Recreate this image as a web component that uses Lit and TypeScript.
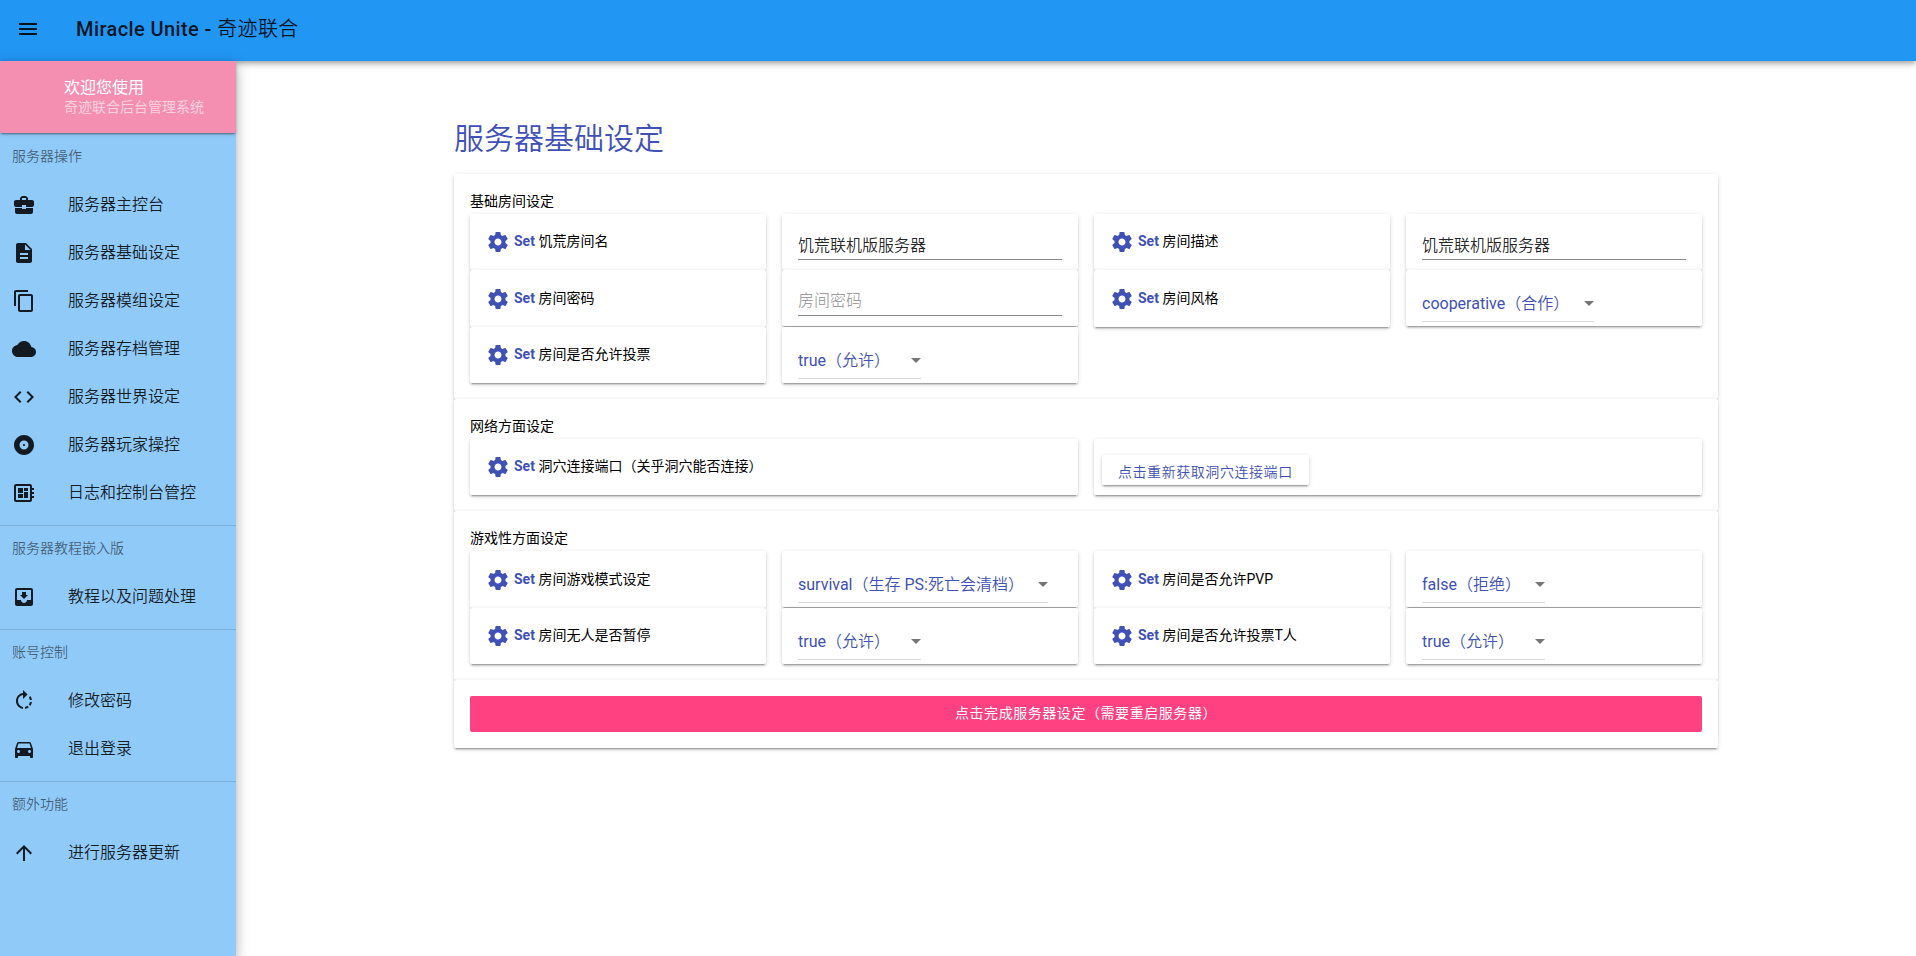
import { LitElement, html, css, svg } from "lit";
import { customElement, property, state } from "lit/decorators.js";
import { classMap } from "lit/directives/class-map.js";

const ICONS: Record<string, string> = {
  menu: "M3 18h18v-2H3v2zm0-5h18v-2H3v2zm0-7v2h18V6H3z",
  business: "M10 16v-1H3.01L3 19c0 1.11.89 2 2 2h14c1.11 0 2-.89 2-2v-4h-7v1h-4zm10-9h-4.01V5l-2-2h-4l-2 2v2H4c-1.1 0-2 .9-2 2v3c0 1.11.89 2 2 2h6v-2h4v2h6c1.1 0 2-.9 2-2V9c0-1.1-.9-2-2-2zm-6 0h-4V5h4v2z",
  description: "M14 2H6c-1.1 0-1.99.9-1.99 2L4 20c0 1.1.89 2 1.99 2H18c1.1 0 2-.9 2-2V8l-6-6zm2 16H8v-2h8v2zm0-4H8v-2h8v2zm-3-5V3.5L18.500 9H13z",
  copy: "M16 1H4c-1.1 0-2 .9-2 2v14h2V3h12V1zm3 4H8c-1.1 0-2 .9-2 2v14c0 1.1.9 2 2 2h11c1.1 0 2-.9 2-2V7c0-1.1-.9-2-2-2zm0 16H8V7h11v14z",
  cloud: "M19.350 10.040C18.670 6.590 15.640 4 12 4 9.110 4 6.600 5.640 5.350 8.040 2.340 8.360 0 10.910 0 14c0 3.310 2.690 6 6 6h13c2.760 0 5-2.240 5-5 0-2.640-2.050-4.780-4.650-4.960z",
  code: "M9.400 16.600L4.800 12l4.600-4.600L8 6l-6 6 6 6 1.400-1.400zm5.200 0l4.600-4.600-4.600-4.600L16 6l6 6-6 6-1.400-1.400z",
  album: "M12 2C6.480 2 2 6.480 2 12s4.480 10 10 10 10-4.480 10-10S17.520 2 12 2zm0 14.500c-2.490 0-4.500-2.010-4.500-4.500S9.510 7.500 12 7.500s4.500 2.010 4.500 4.500-2.010 4.500-4.500 4.500zm0-5.500c-.55 0-1 .45-1 1s.45 1 1 1 1-.45 1-1-.45-1-1-1z",
  board: "M22 9V7h-2V5c0-1.100-.9-2-2-2H4c-1.100 0-2 .9-2 2v14c0 1.100.9 2 2 2h14c1.100 0 2-.9 2-2v-2h2v-2h-2v-2h2v-2h-2V9h2zm-4 10H4V5h14v14zM6 13h5v4H6zm6-6h4v3h-4zM6 7h5v5H6zm6 4h4v6h-4z",
  inbox: "M19 3H4.990c-1.110 0-1.980.9-1.980 2L3 19c0 1.100.88 2 1.990 2H19c1.100 0 2-.9 2-2V5c0-1.100-.9-2-2-2zm0 12h-4c0 1.660-1.340 3-3 3s-3-1.340-3-3H4.990V5H19v10zm-3-5h-2V7h-4v3H8l4 4 4-4z",
  rotate: "M15.550 5.550L11 1v3.070C7.060 4.560 4 7.920 4 12s3.050 7.440 7 7.930v-2.020c-2.840-.48-5-2.940-5-5.910s2.160-5.430 5-5.910V10l4.550-4.450zM19.930 11c-.17-1.390-.72-2.730-1.620-3.890l-1.420 1.420c.54.75.88 1.600 1.020 2.470h2.020zM13 17.900v2.020c1.390-.17 2.740-.71 3.900-1.610l-1.440-1.440c-.75.54-1.590.89-2.460 1.030zm3.890-2.420l1.420 1.410c.9-1.160 1.450-2.500 1.620-3.890h-2.020c-.14.87-.48 1.720-1.020 2.480z",
  car: "M18.920 6.010C18.720 5.420 18.160 5 17.500 5h-11c-.66 0-1.210.42-1.420 1.010L3 12v8c0 .55.45 1 1 1h1c.55 0 1-.45 1-1v-1h12v1c0 .55.45 1 1 1h1c.55 0 1-.45 1-1v-8l-2.080-5.990zM6.500 16c-.83 0-1.500-.67-1.500-1.500S5.670 13 6.500 13s1.500.67 1.500 1.500S7.330 16 6.500 16zm11 0c-.83 0-1.500-.67-1.500-1.500s.67-1.500 1.500-1.500 1.500.67 1.500 1.500-.67 1.500-1.500 1.500zM5 11l1.500-4.500h11L19 11H5z",
  up: "M4 12l1.410 1.410L11 7.830V20h2V7.830l5.580 5.590L20 12l-8-8-8 8z",
  settings: "M19.430 12.980c.04-.32.07-.64.07-.98s-.03-.66-.07-.98l2.110-1.650c.19-.15.24-.42.12-.64l-2-3.460c-.12-.22-.39-.3-.61-.22l-2.490 1c-.52-.4-1.080-.73-1.690-.98l-.38-2.650C14.460 2.180 14.250 2 14 2h-4c-.25 0-.46.18-.49.42l-.38 2.650c-.61.25-1.170.59-1.690.98l-2.490-1c-.23-.09-.49 0-.61.22l-2 3.460c-.13.22-.07.49.12.64l2.110 1.650c-.04.32-.07.65-.07.98s.03.66.07.98l-2.110 1.650c-.19.15-.24.42-.12.64l2 3.460c.12.22.39.3.61.22l2.490-1c.52.4 1.080.73 1.690.98l.38 2.650c.03.24.24.42.49.42h4c.25 0 .46-.18.49-.42l.38-2.650c.61-.25 1.170-.59 1.690-.98l2.490 1c.23.09.49 0 .61-.22l2-3.460c.12-.22.07-.49-.12-.64l-2.110-1.650zM12 15.500c-1.930 0-3.500-1.570-3.500-3.500s1.570-3.500 3.500-3.500 3.500 1.570 3.500 3.500-1.570 3.500-3.500 3.500z",
};

const icon = (name: string) => html`
  <svg class="icon" width="24" height="24" viewBox="0 0 24 24" aria-hidden="true">
    ${svg`<path fill="currentColor" d=${ICONS[name]}></path>`}
  </svg>
`;

const base = css`
  * {
    box-sizing: border-box;
  }
  :host {
    display: block;
    font-family: Roboto, "Noto Sans CJK SC DemiLight", "Noto Sans CJK SC", sans-serif;
    font-size: 14px;
    line-height: 24px;
  }
  .icon {
    display: block;
    flex: none;
  }
`;

interface NavGroup {
  title: string;
  items: { icon: string; label: string }[];
}

const NAV: NavGroup[] = [
  {
    title: "服务器操作",
    items: [
      { icon: "business", label: "服务器主控台" },
      { icon: "description", label: "服务器基础设定" },
      { icon: "copy", label: "服务器模组设定" },
      { icon: "cloud", label: "服务器存档管理" },
      { icon: "code", label: "服务器世界设定" },
      { icon: "album", label: "服务器玩家操控" },
      { icon: "board", label: "日志和控制台管控" },
    ],
  },
  { title: "服务器教程嵌入版", items: [{ icon: "inbox", label: "教程以及问题处理" }] },
  {
    title: "账号控制",
    items: [
      { icon: "rotate", label: "修改密码" },
      { icon: "car", label: "退出登录" },
    ],
  },
  { title: "额外功能", items: [{ icon: "up", label: "进行服务器更新" }] },
];

@customElement("side-drawer")
export class SideDrawer extends LitElement {
  static styles = [
    base,
    css`
      :host {
        background: #90caf9;
        color: rgba(0, 0, 0, 0.87);
        box-shadow: 0 5px 5px -3px rgba(0, 0, 0, 0.2), 0 8px 10px 1px rgba(0, 0, 0, 0.14),
          0 3px 14px 2px rgba(0, 0, 0, 0.12);
      }
      .welcome {
        height: 72px;
        padding: 15px 16px 16px 64px;
        border-radius: 2px;
        background: #f48fb1;
        color: #fff;
        font-family: "Noto Sans CJK SC", sans-serif;
        line-height: 20px;
        box-shadow: 0 3px 1px -2px rgba(0, 0, 0, 0.2), 0 2px 2px 0 rgba(0, 0, 0, 0.14),
          0 1px 5px 0 rgba(0, 0, 0, 0.12);
      }
      .welcome-title {
        font-size: 16px;
      }
      .welcome-text {
        color: rgba(255, 255, 255, 0.6);
      }
      .group + .group {
        margin-top: 8px;
      }
      .group + .group .group-title {
        border-top: 1px solid rgba(0, 0, 0, 0.12);
        line-height: 44px;
      }
      .group-title {
        margin: 0;
        height: 48px;
        padding: 0 12px;
        font-size: 14px;
        font-weight: 400;
        line-height: 46px;
        color: rgba(0, 0, 0, 0.54);
      }
      .list {
        margin: 0;
        padding: 0;
        list-style: none;
      }
      .item {
        display: flex;
        align-items: center;
        gap: 32px;
        height: 48px;
        padding: 0 12px;
        font-size: 16px;
        color: inherit;
        text-decoration: none;
      }
      .item:hover {
        background: rgba(0, 0, 0, 0.08);
      }
    `,
  ];

  render() {
    return html`
      <div class="welcome">
        <div class="welcome-title">欢迎您使用</div>
        <div class="welcome-text">奇迹联合后台管理系统</div>
      </div>
      <nav>
        ${NAV.map(
          (group) => html`
            <section class="group">
              <h2 class="group-title">${group.title}</h2>
              <ul class="list">
                ${group.items.map(
                  (item) => html`<li><a class="item" href="#">${icon(item.icon)}<span>${item.label}</span></a></li>`
                )}
              </ul>
            </section>
          `
        )}
      </nav>
    `;
  }
}

type Control =
  | { kind: "text"; value: string; placeholder: string }
  | { kind: "select"; options: string[]; value: string }
  | { kind: "button"; text: string };

interface Field {
  id: string;
  label: string;
  control: Control;
}

const YES_NO = ["true（允许）", "false（拒绝）"];

const SECTIONS: { name: string; title: string; fields: Field[] }[] = [
  {
    name: "room",
    title: "基础房间设定",
    fields: [
      { id: "name", label: "饥荒房间名", control: { kind: "text", value: "饥荒联机版服务器", placeholder: "饥荒房间名" } },
      { id: "desc", label: "房间描述", control: { kind: "text", value: "饥荒联机版服务器", placeholder: "房间描述" } },
      { id: "password", label: "房间密码", control: { kind: "text", value: "", placeholder: "房间密码" } },
      { id: "style", label: "房间风格", control: { kind: "select", options: ["cooperative（合作）"], value: "cooperative（合作）" } },
      { id: "vote", label: "房间是否允许投票", control: { kind: "select", options: YES_NO, value: YES_NO[0] } },
    ],
  },
  {
    name: "network",
    title: "网络方面设定",
    fields: [
      { id: "port", label: "洞穴连接端口（关乎洞穴能否连接）", control: { kind: "button", text: "点击重新获取洞穴连接端口" } },
    ],
  },
  {
    name: "game",
    title: "游戏性方面设定",
    fields: [
      { id: "mode", label: "房间游戏模式设定", control: { kind: "select", options: ["survival（生存 PS:死亡会清档）"], value: "survival（生存 PS:死亡会清档）" } },
      { id: "pvp", label: "房间是否允许PVP", control: { kind: "select", options: YES_NO, value: YES_NO[1] } },
      { id: "pause", label: "房间无人是否暂停", control: { kind: "select", options: YES_NO, value: YES_NO[0] } },
      { id: "kick", label: "房间是否允许投票T人", control: { kind: "select", options: YES_NO, value: YES_NO[0] } },
    ],
  },
];

@customElement("settings-field")
export class SettingsField extends LitElement {
  @property({ attribute: false }) field!: Field;

  static styles = [
    base,
    css`
      :host {
        display: contents;
      }
      .cell {
        display: flex;
        align-items: center;
        min-width: 0;
        background: #fff;
        border-radius: 2px;
        box-shadow: 0 3px 1px -2px rgba(0, 0, 0, 0.2), 0 2px 2px 0 rgba(0, 0, 0, 0.14),
          0 1px 5px 0 rgba(0, 0, 0, 0.12);
      }
      .caption {
        gap: 4px;
        padding: 0 16px;
        color: #000;
      }
      .caption .icon,
      .set {
        color: #3f51b5;
      }
      .caption-text {
        padding-bottom: 2px;
        font-family: Roboto, "Noto Sans CJK SC", sans-serif;
      }
      .set {
        font-weight: 700;
      }
      .control {
        align-self: start;
        align-items: flex-start;
        height: 56px;
        padding: 16px 16px 0;
      }
      .control.has-button {
        padding: 16px 8px 0;
      }
      .input {
        width: 100%;
        height: 30px;
        padding: 0 0 1px;
        border: 0;
        border-bottom: 1px solid rgba(0, 0, 0, 0.46);
        outline: 0;
        background: transparent;
        color: rgba(0, 0, 0, 0.87);
        font: inherit;
        font-size: 16px;
      }
      .input::placeholder {
        color: rgba(0, 0, 0, 0.38);
        opacity: 1;
      }
      .select-wrap {
        display: flex;
        align-items: center;
        height: 36px;
        border-bottom: 1px solid rgba(0, 0, 0, 0.14);
      }
      .select-wrap::after {
        content: "";
        width: 0;
        margin-left: -10px;
        border: 5px solid transparent;
        border-top-color: rgba(0, 0, 0, 0.54);
        border-bottom: 0;
        pointer-events: none;
      }
      .select {
        appearance: none;
        height: 35px;
        padding: 0 24px 0 0;
        border: 0;
        outline: 0;
        background: transparent;
        color: #3f51b5;
        font: inherit;
        font-size: 16px;
      }
      .button {
        height: 30px;
        padding: 0 16px;
        border: 0;
        border-radius: 2px;
        background: #fff;
        color: #3f51b5;
        font: inherit;
        letter-spacing: 0.04em;
        line-height: 34px;
        white-space: nowrap;
        cursor: pointer;
        box-shadow: 0 3px 1px -2px rgba(0, 0, 0, 0.2), 0 2px 2px 0 rgba(0, 0, 0, 0.14),
          0 1px 5px 0 rgba(0, 0, 0, 0.12);
      }
    `,
  ];

  private renderControl(id: string, c: Control) {
    if (c.kind === "text") {
      return html`<input class="input" id=${id} type="text" .value=${c.value} placeholder=${c.placeholder} />`;
    }
    if (c.kind === "select") {
      return html`<span class="select-wrap">
        <select class="select" id=${id}>
          ${c.options.map((o) => html`<option ?selected=${o === c.value}>${o}</option>`)}
        </select>
      </span>`;
    }
    return html`<button class="button" id=${id} type="button">${c.text}</button>`;
  }

  render() {
    const { id, label, control } = this.field;
    return html`
      <label class="cell caption" for=${id}>
        ${icon("settings")}
        <span class="caption-text"><span class="set">Set</span> ${label}</span>
      </label>
      <div class=${classMap({ cell: true, control: true, "has-button": control.kind === "button" })}>
        ${this.renderControl(id, control)}
      </div>
    `;
  }
}

@customElement("app-root")
export class AppRoot extends LitElement {
  @state() private drawerOpen = true;

  static styles = [
    base,
    css`
      :host {
        display: flex;
        flex-direction: column;
        min-height: 100vh;
        background: #fff;
      }
      .bar {
        display: flex;
        align-items: center;
        gap: 36px;
        height: 61px;
        padding: 0 16px 3px;
        background: #2196f3;
        color: rgba(0, 0, 0, 0.87);
        box-shadow: 0 2px 4px -1px rgba(0, 0, 0, 0.2), 0 4px 5px 0 rgba(0, 0, 0, 0.14),
          0 1px 10px 0 rgba(0, 0, 0, 0.12);
        z-index: 1;
      }
      .menu {
        padding: 0;
        border: 0;
        background: none;
        color: inherit;
        cursor: pointer;
      }
      .brand {
        font-size: 20px;
        font-weight: 500;
        letter-spacing: 0.02em;
      }
      .brand-cn {
        font-weight: 400;
      }
      .body {
        display: flex;
        flex: 1;
      }
      .drawer {
        flex: none;
        width: 236px;
        z-index: 2;
      }
      .main {
        flex: 1;
        min-width: 0;
        padding: 53px 0 40px 20px;
      }
      .container {
        max-width: 1280px;
        margin: 0 auto;
        padding: 0 8px;
      }
      .heading {
        margin: 0 0 10px;
        color: #3f51b5;
        font-size: 30px;
        font-weight: 400;
        line-height: 50px;
      }
      .panel {
        padding: 16px;
        background: #fff;
        border-radius: 2px;
        box-shadow: 0 3px 1px -2px rgba(0, 0, 0, 0.2), 0 2px 2px 0 rgba(0, 0, 0, 0.14),
          0 1px 5px 0 rgba(0, 0, 0, 0.12);
      }
      .panel-title {
        margin: 0;
        padding-bottom: 2px;
        color: #000;
        font-family: Roboto, "Noto Sans CJK SC", sans-serif;
        font-size: 14px;
        font-weight: 400;
        line-height: 22px;
      }
      .grid {
        display: grid;
        grid-template-columns: repeat(4, minmax(0, 1fr));
        grid-auto-rows: 56px;
        column-gap: 16px;
      }
      .grid.room {
        grid-template-rows: 56px 57px 56px;
      }
      .grid.network {
        grid-template-columns: repeat(2, minmax(0, 1fr));
      }
      .grid.game {
        grid-template-rows: 57px 56px;
      }
      .submit {
        display: block;
        width: 100%;
        height: 36px;
        padding: 0 0 2px;
        border: 0;
        border-radius: 2px;
        background: #ff4081;
        color: #fff;
        font: inherit;
        font-family: Roboto, "Noto Sans CJK SC", sans-serif;
        letter-spacing: 0.04em;
        cursor: pointer;
      }
    `,
  ];

  render() {
    return html`
      <header class="bar">
        <button class="menu" type="button" aria-label="菜单" @click=${() => (this.drawerOpen = !this.drawerOpen)}>
          ${icon("menu")}
        </button>
        <span class="brand">Miracle Unite - <span class="brand-cn">奇迹联合</span></span>
      </header>
      <div class="body">
        ${this.drawerOpen ? html`<side-drawer class="drawer"></side-drawer>` : ""}
        <main class="main">
          <form class="container" @submit=${(e: Event) => e.preventDefault()}>
            <h1 class="heading">服务器基础设定</h1>
            ${SECTIONS.map(
              (s) => html`
                <section class="panel">
                  <h2 class="panel-title">${s.title}</h2>
                  <div class="grid ${s.name}">
                    ${s.fields.map((f) => html`<settings-field .field=${f}></settings-field>`)}
                  </div>
                </section>
              `
            )}
            <div class="panel">
              <button class="submit" type="submit">点击完成服务器设定（需要重启服务器）</button>
            </div>
          </form>
        </main>
      </div>
    `;
  }
}
